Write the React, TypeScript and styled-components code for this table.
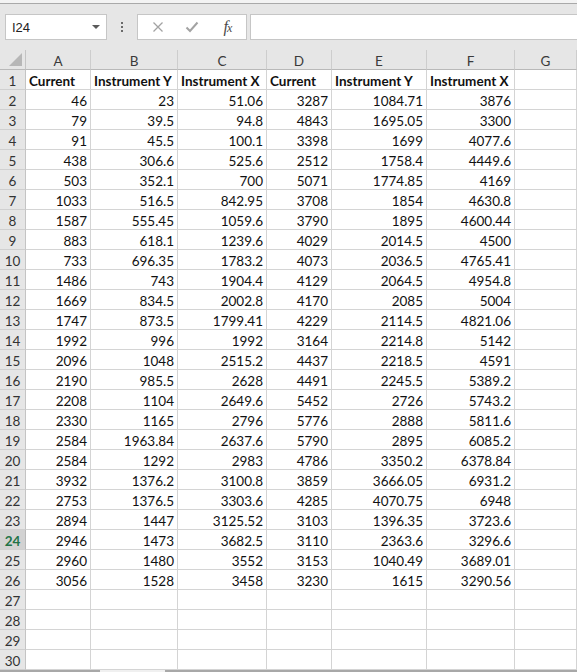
import React from "react";
import styled, { createGlobalStyle } from "styled-components";

const GlobalStyle = createGlobalStyle`
  html, body { margin: 0; padding: 0; background: #ffffff; overflow: hidden; }
  body { font-family: "Lato", "Liberation Sans", sans-serif; }
  * { box-sizing: border-box; }
`;

const Page = styled.div`
  width: 577px;
  height: 672px;
  overflow: hidden;
`;

const TopStrip = styled.div`
  height: 4px;
  background: #f3f3f3;
  border-bottom: 1px solid #a9a9a9;
`;

const FormulaBar = styled.div`
  height: 46px;
  background: #e6e6e6;
  display: flex;
  align-items: flex-start;
  padding: 10px 0 0 5px;
`;

const NameBox = styled.div`
  width: 102px;
  height: 26px;
  background: #ffffff;
  border: 1px solid #c6c6c6;
  display: flex;
  align-items: center;
  justify-content: space-between;
  padding: 0 6px 0 6px;
  font-family: "Liberation Sans", sans-serif;
  font-size: 13px;
  color: #222;
`;

const DropArrow = styled.span`
  width: 0;
  height: 0;
  border-left: 4px solid transparent;
  border-right: 4px solid transparent;
  border-top: 4px solid #5a5a5a;
`;

const DotsArea = styled.div`
  width: 30px;
  height: 26px;
  display: flex;
  flex-direction: column;
  align-items: center;
  justify-content: center;
  gap: 2px;
`;

const Dot = styled.span`
  width: 2px;
  height: 2px;
  background: #6a6a6a;
`;

const ButtonGroup = styled.div`
  width: 110px;
  height: 26px;
  background: #ffffff;
  border: 1px solid #c6c6c6;
  display: flex;
  align-items: center;
  padding: 0 0 0 5px;
`;

const IconSlot = styled.span<{ $w: number }>`
  width: ${(p) => p.$w}px;
  display: flex;
  align-items: center;
  justify-content: center;
`;

const Fx = styled.span`
  font-family: "Liberation Serif", serif;
  font-style: italic;
  font-size: 16px;
  line-height: 1;
  color: #4a4a4a;
`;

const FxSub = styled.span`
  font-size: 12px;
  margin-left: -1px;
`;

const FormulaInput = styled.div`
  flex: 1;
  height: 26px;
  margin-left: 3px;
  background: #ffffff;
  border: 1px solid #c6c6c6;
  border-right: none;
`;

const Sheet = styled.div`
  display: grid;
  grid-template-columns: 26px 65px 87px 89px 65px 95px 88px 1fr;
  grid-auto-rows: 20px;
`;

const Corner = styled.div`
  background: #e6e6e6;
  border-right: 1px solid #c4c4c4;
  border-bottom: 1px solid #b9b9b9;
  position: relative;
  &::after {
    content: "";
    position: absolute;
    right: 3px;
    bottom: 3px;
    width: 0;
    height: 0;
    border-left: 13px solid transparent;
    border-bottom: 13px solid #b7b7b7;
  }
`;

const ColHeader = styled.div`
  background: #e6e6e6;
  border-right: 1px solid #cdcdcd;
  border-bottom: 1px solid #b9b9b9;
  display: flex;
  align-items: center;
  justify-content: center;
  padding-top: 2px;
  font-size: 13.5px;
  color: #3a3a3a;
`;

const RowHeader = styled.div<{ $selected?: boolean }>`
  background: ${(p) => (p.$selected ? "#d2d2d2" : "#e6e6e6")};
  border-right: 1px solid ${(p) => (p.$selected ? "#b9b9b9" : "#c4c4c4")};
  border-bottom: 1px solid #d0d0d0;
  display: flex;
  align-items: center;
  justify-content: center;
  padding-top: 2px;
  font-size: 13.5px;
  font-weight: ${(p) => (p.$selected ? 700 : 400)};
  color: ${(p) => (p.$selected ? "#217346" : "#333")};
`;

const Cell = styled.div<{ $bold?: boolean }>`
  border-right: 1px solid #d4d4d4;
  border-bottom: 1px solid #d4d4d4;
  display: flex;
  align-items: center;
  justify-content: ${(p) => (p.$bold ? "flex-start" : "flex-end")};
  padding: 2px 3px 0 3px;
  font-size: 13.5px;
  font-weight: ${(p) => (p.$bold ? 700 : 400)};
  color: #111;
  white-space: nowrap;
  overflow: visible;
`;

const BottomBar = styled.div`
  display: flex;
  height: 2px;
`;

const BarSegment = styled.div<{ $w?: number; $light?: boolean }>`
  ${(p) => (p.$w ? `width: ${p.$w}px;` : "flex: 1;")}
  border-top: 2px solid ${(p) => (p.$light ? "#f0f0f0" : "#a8a8a8")};
`;

const columns = ["A", "B", "C", "D", "E", "F", "G"];
const headerRow = ["Current", "Instrument Y", "Instrument X", "Current", "Instrument Y", "Instrument X", ""];

const data: string[][] = [
  ["46", "23", "51.06", "3287", "1084.71", "3876"],
  ["79", "39.5", "94.8", "4843", "1695.05", "3300"],
  ["91", "45.5", "100.1", "3398", "1699", "4077.6"],
  ["438", "306.6", "525.6", "2512", "1758.4", "4449.6"],
  ["503", "352.1", "700", "5071", "1774.85", "4169"],
  ["1033", "516.5", "842.95", "3708", "1854", "4630.8"],
  ["1587", "555.45", "1059.6", "3790", "1895", "4600.44"],
  ["883", "618.1", "1239.6", "4029", "2014.5", "4500"],
  ["733", "696.35", "1783.2", "4073", "2036.5", "4765.41"],
  ["1486", "743", "1904.4", "4129", "2064.5", "4954.8"],
  ["1669", "834.5", "2002.8", "4170", "2085", "5004"],
  ["1747", "873.5", "1799.41", "4229", "2114.5", "4821.06"],
  ["1992", "996", "1992", "3164", "2214.8", "5142"],
  ["2096", "1048", "2515.2", "4437", "2218.5", "4591"],
  ["2190", "985.5", "2628", "4491", "2245.5", "5389.2"],
  ["2208", "1104", "2649.6", "5452", "2726", "5743.2"],
  ["2330", "1165", "2796", "5776", "2888", "5811.6"],
  ["2584", "1963.84", "2637.6", "5790", "2895", "6085.2"],
  ["2584", "1292", "2983", "4786", "3350.2", "6378.84"],
  ["3932", "1376.2", "3100.8", "3859", "3666.05", "6931.2"],
  ["2753", "1376.5", "3303.6", "4285", "4070.75", "6948"],
  ["2894", "1447", "3125.52", "3103", "1396.35", "3723.6"],
  ["2946", "1473", "3682.5", "3110", "2363.6", "3296.6"],
  ["2960", "1480", "3552", "3153", "1040.49", "3689.01"],
  ["3056", "1528", "3458", "3230", "1615", "3290.56"],
];

const XIcon = () => (
  <svg width="12" height="12" viewBox="0 0 12 12">
    <path d="M1.5 1.5 L10.5 10.5 M10.5 1.5 L1.5 10.5" stroke="#a3a3a3" strokeWidth="1.3" fill="none" />
  </svg>
);

const CheckIcon = () => (
  <svg width="14" height="12" viewBox="0 0 14 12">
    <path d="M1.5 6.5 L5 10 L12.5 1.5" stroke="#a3a3a3" strokeWidth="2" fill="none" />
  </svg>
);

export default function App() {
  const rows: React.ReactNode[] = [];
  rows.push(<Corner key="corner" />);
  columns.forEach((c) => rows.push(<ColHeader key={"h" + c}>{c}</ColHeader>));
  rows.push(<RowHeader key="r1">1</RowHeader>);
  headerRow.forEach((t, i) =>
    rows.push(
      <Cell key={"c1-" + i} $bold>
        {t}
      </Cell>
    )
  );
  for (let r = 2; r <= 30; r++) {
    const vals = data[r - 2] || [];
    rows.push(
      <RowHeader key={"r" + r} $selected={r === 24}>
        {r}
      </RowHeader>
    );
    for (let c = 0; c < 7; c++) {
      rows.push(<Cell key={`c${r}-${c}`}>{vals[c] || ""}</Cell>);
    }
  }

  return (
    <Page>
      <GlobalStyle />
      <TopStrip />
      <FormulaBar>
        <NameBox>
          <span>I24</span>
          <DropArrow />
        </NameBox>
        <DotsArea>
          <Dot />
          <Dot />
          <Dot />
        </DotsArea>
        <ButtonGroup>
          <IconSlot $w={30}>
            <XIcon />
          </IconSlot>
          <IconSlot $w={38}>
            <CheckIcon />
          </IconSlot>
          <IconSlot $w={34}>
            <Fx>
              f<FxSub>x</FxSub>
            </Fx>
          </IconSlot>
        </ButtonGroup>
        <FormulaInput />
      </FormulaBar>
      <Sheet>{rows}</Sheet>
      <BottomBar>
        <BarSegment $w={100} />
        <BarSegment $w={65} $light />
        <BarSegment />
      </BottomBar>
    </Page>
  );
}
